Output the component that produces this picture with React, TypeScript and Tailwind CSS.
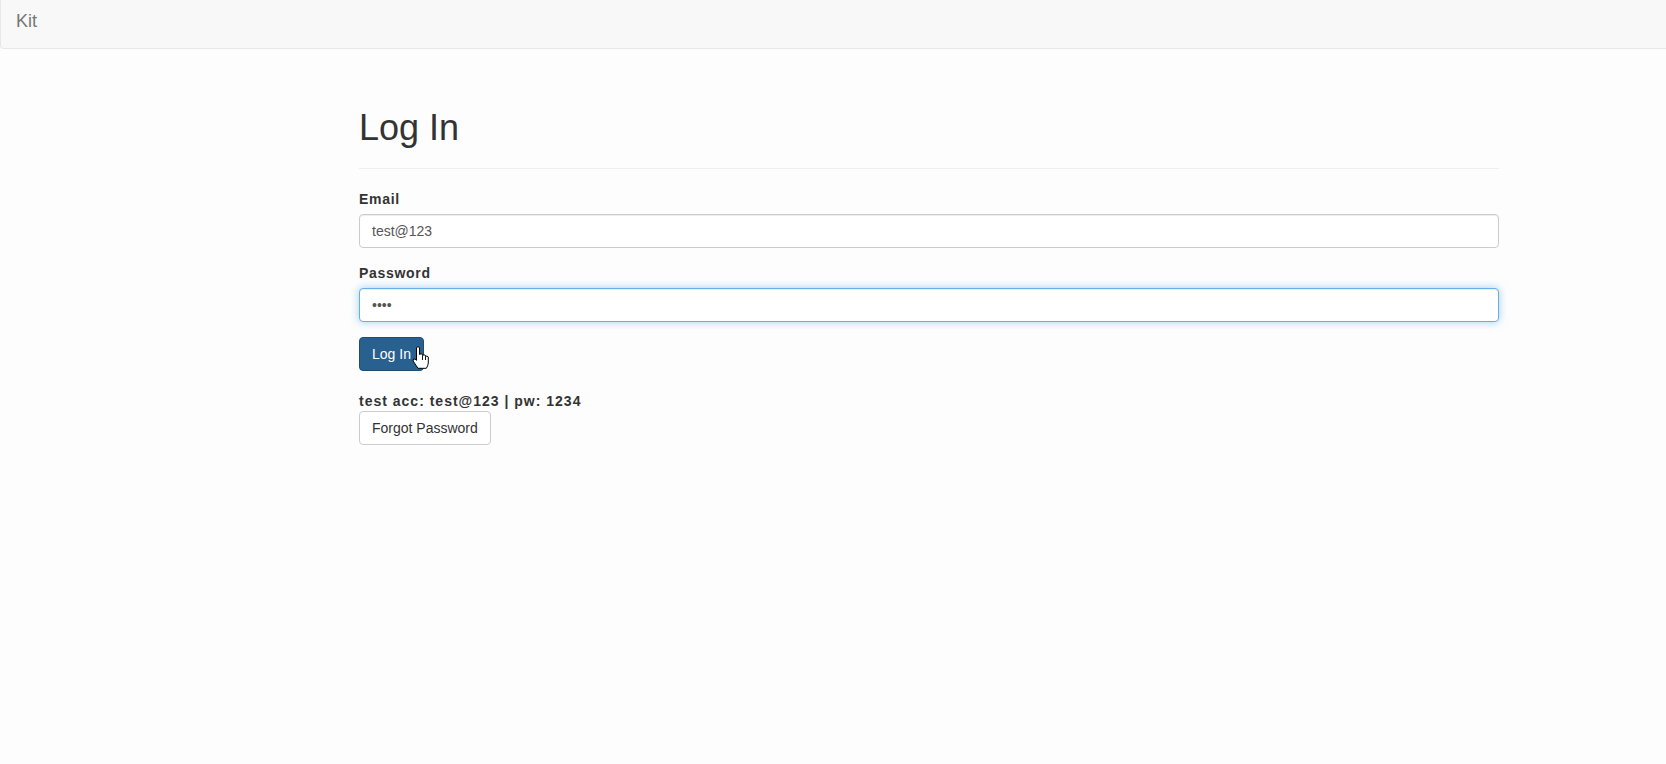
const HandCursor = () => (
  <svg
    width="17"
    height="23"
    viewBox="0 0 17 23"
    className="pointer-events-none absolute left-[53px] top-[9px]"
  >
    <path
      d="M4.5 1.5 Q6 0 7.5 1.5 L7.5 8.5 Q9 7 10.5 8.5 L10.5 9.5 Q12 8 13.5 9.5 L13.5 10.5 Q15 9.3 16.3 11 L16.3 17 Q16 20 14.3 22.3 L6 22.3 Q4.2 19.5 1.6 15.8 Q0.4 13.8 1.8 13 Q3 12.6 4.5 14.3 Z"
      fill="#ffffff"
      stroke="#000000"
      strokeWidth="1"
      strokeLinejoin="round"
    />
    <path d="M10.5 9.5 L10.5 14 M13.5 10.5 L13.5 14" stroke="#000000" strokeWidth="0.9" />
  </svg>
);

const App = () => {
  return (
    <div className="min-h-[764px] bg-[#fdfdfd] font-['Liberation_Sans',Arial,sans-serif] text-[14px] leading-[20px] text-[#333]">
      {/* navbar */}
      <nav className="h-[49px] bg-[#f8f8f8] border-l border-b border-[#e7e7e7] rounded-bl-[4px]">
        <div className="pl-[15px] pt-[11px] text-[18px] leading-[20px] text-[#777]">Kit</div>
      </nav>

      <div className="pl-[359px] pt-[59px]">
        <div className="w-[1140px]">
          <h1 className="text-[36px] leading-[39.6px] font-normal text-[#333]">Log In</h1>
          <hr className="mt-[20px] mb-[20px] border-0 border-t border-[#eee]" />

          <form onSubmit={(e) => e.preventDefault()}>
            <div className="mb-[15px]">
              <label className="inline-block mb-[5px] font-bold tracking-[0.7px]">Email</label>
              <input
                type="text"
                readOnly
                value="test@123"
                className="block w-full h-[34px] px-[12px] py-[6px] bg-white text-[#555] border border-[#ccc] rounded-[4px] shadow-[inset_0_1px_1px_rgba(0,0,0,0.075)] outline-none"
              />
            </div>
            <div className="mb-[15px]">
              <label className="inline-block mb-[5px] font-bold tracking-[0.7px]">Password</label>
              <input
                type="password"
                readOnly
                value="1234"
                className="block w-full h-[34px] px-[12px] py-[6px] bg-white text-[#555] border border-[#66afe9] rounded-[4px] shadow-[inset_0_1px_1px_rgba(0,0,0,0.075),0_0_8px_rgba(102,175,233,0.6)] outline-none"
              />
            </div>
            <div className="relative inline-block">
              <button
                type="submit"
                className="h-[34px] px-[12px] bg-[#286090] border border-[#204d74] rounded-[4px] text-white"
              >
                Log In
              </button>
              <HandCursor />
            </div>
          </form>

          <div className="mt-[20px] font-bold tracking-[1px]">test acc: test@123 | pw: 1234</div>
          <button
            type="button"
            className="h-[34px] px-[12px] bg-white border border-[#ccc] rounded-[4px] text-[#333]"
          >
            Forgot Password
          </button>
        </div>
      </div>
    </div>
  );
};

export default App;
